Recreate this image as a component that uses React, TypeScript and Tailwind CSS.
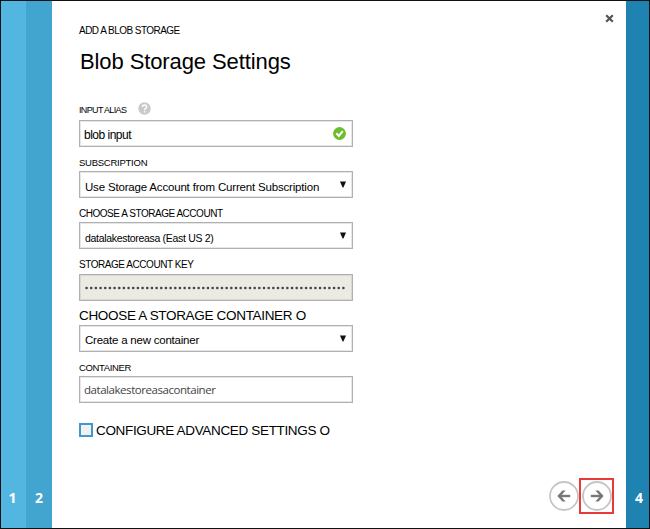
import type { ReactNode } from 'react';

function Field({ label, children }: { label: ReactNode; children: ReactNode }) {
  return (
    <div className="flex flex-col">
      <div className="flex h-6 items-start">{label}</div>
      {children}
    </div>
  );
}

const box =
  'flex h-[27px] w-[274px] shrink-0 items-center border border-[#b0b0b0] bg-white pl-[5px] pr-[6px] shadow-[inset_0_0_0_1px_#e6e6e6]';

function Caret() {
  return (
    <svg className="mb-px ml-auto shrink-0" width="6" height="7" viewBox="0 0 6 7">
      <path d="M0 0.5h6L3.4 6.5h-.8z" fill="#111" />
    </svg>
  );
}

function Arrow({ flip = false }: { flip?: boolean }) {
  return (
    <svg width="30" height="30" viewBox="0 0 30 30" className={flip ? '-scale-x-100' : ''}>
      <circle cx="15" cy="15" r="14" fill="#fff" stroke="#c6c6c6" strokeWidth="1.8" />
      <path d="M8.8 15H20.4" fill="none" stroke="#777" strokeWidth="2.4" />
      <path d="M13.4 9.6h3.2l5 5.4-5 5.4h-3.2l4.9-5.4z" fill="#777" />
    </svg>
  );
}

export default function App() {
  return (
    <div className="flex h-[529px] w-[650px] overflow-hidden whitespace-nowrap border border-[#111] bg-white font-['Liberation_Sans',Arial,sans-serif] text-black">
      <div className="flex w-[25px] shrink-0 items-end justify-center bg-[#53b6e1] pr-[2px] pb-5 font-['Open_Sans',sans-serif] text-[14px] leading-5 font-bold text-white">
        1
      </div>
      <div className="flex w-[26px] shrink-0 items-end justify-center bg-[#42a5d0] pb-5 font-['Open_Sans',sans-serif] text-[14px] leading-5 font-bold text-white">
        2
      </div>
      <main className="flex min-w-0 flex-1 flex-col pl-[27px]">
        <header className="flex h-[95px] justify-between">
          <div className="pt-[23px]">
            <p className="text-[10px] leading-[14px] tracking-[-0.54px]">ADD A BLOB STORAGE</p>
            <h1 className="mt-[10px] pl-px text-[22px] leading-[28px] tracking-[-0.1px]">Blob Storage Settings</h1>
          </div>
          <svg className="mt-[13px] mr-[12px]" width="9" height="9" viewBox="0 0 9 9">
            <path d="M1.2 1.2l6.6 6.6M7.8 1.2L1.2 7.8" stroke="#555" strokeWidth="2.2" />
          </svg>
        </header>

        <div className="flex flex-col">
          <Field
            label={
              <>
                <span className="pt-[8px] text-[9px] leading-3 tracking-[-0.64px]">INPUT ALIAS</span>
                <svg className="mt-[6px] ml-[12px]" width="13" height="13" viewBox="0 0 13 13">
                  <circle cx="6.5" cy="6.5" r="6.2" fill="#c9c9c9" />
                  <path d="M4.5 5.1c0-2.7 4.1-2.7 4.1-.2 0 1.5-2 1.5-2 3" fill="none" stroke="#fff" strokeWidth="1.5" />
                  <path d="M5.8 9h1.6v1.5H5.8z" fill="#fff" />
                </svg>
              </>
            }
          >
            <div className={box}>
              <span className="-ml-px pt-[3px] text-[12px] leading-4 tracking-[-0.5px]">blob input</span>
              <svg className="ml-auto" width="13" height="13" viewBox="0 0 13 13">
                <circle cx="6.5" cy="6.5" r="6.4" fill="#6cbd2c" />
                <path d="M3.3 6.3l2.5 2.6 4-4.7" fill="none" stroke="#fff" strokeWidth="2" />
              </svg>
            </div>
          </Field>

          <Field label={<span className="pt-[10px] text-[9.5px] leading-3 tracking-[-0.25px]">SUBSCRIPTION</span>}>
            <div className={box}>
              <span className="pt-1 text-[11.5px] leading-4 tracking-[-0.18px]">
                Use Storage Account from Current Subscription
              </span>
              <Caret />
            </div>
          </Field>

          <Field label={<span className="pt-[10px] text-[10px] leading-3 tracking-[-0.47px]">CHOOSE A STORAGE ACCOUNT</span>}>
            <div className={box}>
              <span className="pt-1 text-[10.5px] leading-4 tracking-[-0.31px]">datalakestoreasa (East US 2)</span>
              <Caret />
            </div>
          </Field>

          <div className="h-px" />
          <Field label={<span className="pt-[9px] text-[10px] leading-3 tracking-[-0.45px]">STORAGE ACCOUNT KEY</span>}>
            <div className="flex h-[27px] w-[274px] shrink-0 items-center border border-[#b0b0b0] bg-[#ebebe4] pl-[5px] shadow-[inset_0_0_0_1px_#d8d8d3]">
              <svg width="263" height="4" viewBox="0 0 263 4">
                <path d="M1.5 2H263" stroke="#444" strokeWidth="2.5" strokeLinecap="round" strokeDasharray="0.1 4.57" />
              </svg>
            </div>
          </Field>

          <Field label={<span className="pt-[7px] text-[13.5px] leading-4 tracking-[-0.32px]">CHOOSE A STORAGE CONTAINER O</span>}>
            <div className={box}>
              <span className="pt-[2px] text-[11.5px] leading-4 tracking-[-0.22px]">Create a new container</span>
              <Caret />
            </div>
          </Field>

          <Field label={<span className="pt-[10px] text-[9.5px] leading-3 tracking-[-0.35px]">CONTAINER</span>}>
            <div className={box}>
              <span className="-ml-px font-['Open_Sans',sans-serif] text-[11.5px] leading-4 tracking-[-0.45px] text-[#444]">
                datalakestoreasacontainer
              </span>
            </div>
          </Field>
        </div>

        <label className="mt-[19px] flex items-start gap-[3px] text-[13.5px] leading-4 tracking-[-0.34px]">
          <span className="mt-px h-[14px] w-[14px] border-2 border-[#4299cd] bg-[#f1f1f1]" />
          <span className="pt-px">CONFIGURE ADVANCED SETTINGS O</span>
        </label>

        <div className="mt-auto mr-[12px] mb-[14px] flex items-center justify-end">
          <Arrow flip />
          <div className="flex h-[36px] w-[35px] items-center justify-center border-2 border-[#e83a3a]">
            <Arrow />
          </div>
        </div>
      </main>
      <div className="flex w-[23px] shrink-0 items-end justify-center bg-[#1f83b1] pb-5 pl-[3px] font-['Open_Sans',sans-serif] text-[14px] leading-5 font-bold text-white">
        4
      </div>
    </div>
  );
}
